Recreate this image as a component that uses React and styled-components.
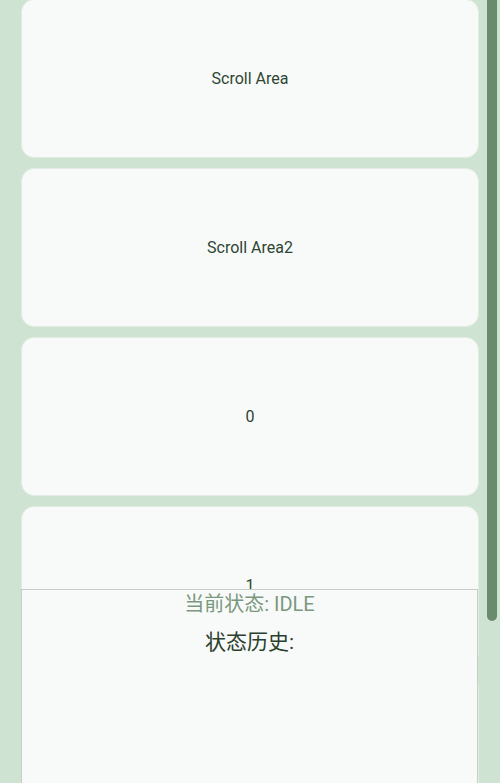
import React from 'react';
import styled, { createGlobalStyle } from 'styled-components';

const GlobalStyle = createGlobalStyle`
    html, body {
        margin: 0;
        padding: 0;
        background: #cee3d1;
        overflow: hidden;
    }
    body {
        font-family: Roboto, "Noto Sans CJK SC", sans-serif;
    }
`;

const Page = styled.div`
    position: relative;
    width: 500px;
    height: 783px;
    overflow: hidden;
    background: #cee3d1;
`;

const List = styled.div`
    display: flex;
    flex-direction: column;
    gap: 10px;
    padding: 0 21px;
    margin-top: -1px;
`;

const Card = styled.div`
    flex: none;
    height: 157px;
    display: flex;
    align-items: center;
    justify-content: center;
    background: #f8faf9;
    border: 1px solid #e2ece3;
    border-radius: 13px;
    color: #2d4532;
    font-size: 16px;
`;

const ScrollBar = styled.div`
    position: absolute;
    top: 0;
    right: 3px;
    width: 10px;
    height: 621px;
    background: #6b8b6f;
    border-radius: 0 0 5px 5px;
`;

const StatusPanel = styled.div`
    position: absolute;
    left: 21px;
    bottom: 0;
    width: 455px;
    height: 193px;
    background: #f8faf9;
    border: 1px solid #c5cec7;
    border-bottom: none;
    display: flex;
    flex-direction: column;
    align-items: center;
`;

const StatusLine = styled.div`
    font-size: ${(p) => p.size}px;
    line-height: 28px;
    color: ${(p) => p.color};
    margin-top: ${(p) => p.gap}px;
`;

const items = ['Scroll Area', 'Scroll Area2', '0', '1', '2'];

export default function App() {
    return (
        <Page>
            <GlobalStyle />
            <List>
                {items.map((label) => (
                    <Card key={label}>{label}</Card>
                ))}
            </List>
            <ScrollBar />
            <StatusPanel>
                <StatusLine color="#7a987e" size={20} gap={0}>当前状态: IDLE</StatusLine>
                <StatusLine color="#2a3f2e" size={21} gap={10}>状态历史:</StatusLine>
            </StatusPanel>
        </Page>
    );
}
